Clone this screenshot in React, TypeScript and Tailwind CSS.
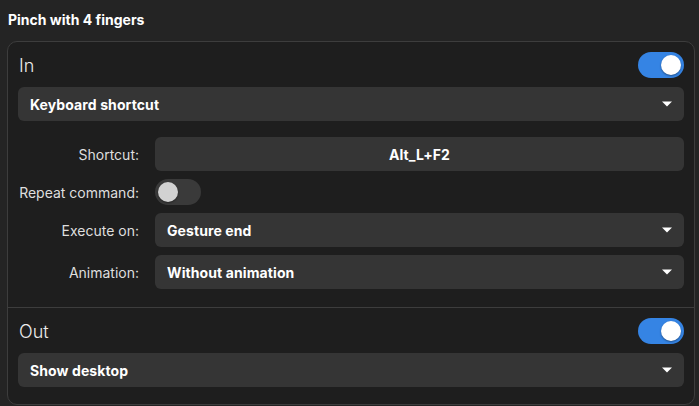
import React from "react";

function Toggle({ on }: { on: boolean }) {
  return (
    <div
      className={
        on
          ? "flex h-[26px] w-[46px] items-center justify-end rounded-full bg-[#3584e4] px-[3px]"
          : "flex h-[26px] w-[46px] items-center justify-start rounded-full bg-[#3a3a3a] px-[3px]"
      }
    >
      <div
        className={
          on
            ? "h-[20px] w-[20px] rounded-full bg-white shadow-[0_1px_2px_rgba(0,0,0,0.4)]"
            : "h-[20px] w-[20px] rounded-full bg-[#d2d2d2] shadow-[0_1px_2px_rgba(0,0,0,0.4)]"
        }
      />
    </div>
  );
}

function Arrow() {
  return (
    <svg width="10" height="6" viewBox="0 0 10 6" className="shrink-0">
      <path d="M0 0.5 L10 0.5 L5 5.5 Z" fill="#ffffff" />
    </svg>
  );
}

function Dropdown({ label }: { label: string }) {
  return (
    <div className="flex h-[34px] flex-1 items-center justify-between rounded-[6px] bg-[#353535] pl-3 pr-3">
      <span className="text-[14px] font-bold tracking-[0.1px] text-white">{label}</span>
      <Arrow />
    </div>
  );
}

function Row({ label, children }: { label: string; children: React.ReactNode }) {
  return (
    <div className="flex items-center gap-4">
      <div className="flex w-[121px] shrink-0 justify-end whitespace-nowrap text-[14px] text-[#dedede]">
        {label}
      </div>
      {children}
    </div>
  );
}

export default function App() {
  return (
    <div
      className="h-[406px] w-[699px] overflow-hidden bg-[#242424] px-[7px] pt-[10px]"
      style={{ fontFamily: "Inter, 'Noto Sans', sans-serif" }}
    >
      <div className="pl-[1px] text-[14px] font-bold leading-[20px] text-white">Pinch with 4 fingers</div>
      <div className="mt-[11px] w-[688px] rounded-[10px] border border-[#3d3d3d] bg-[#1e1e1e]">
        <div className="flex flex-col px-[10px] pb-[18px] pt-[10px]">
          <div className="flex h-[26px] items-center justify-between">
            <span className="pl-[1px] text-[18px] font-light text-[#ececec]">In</span>
            <Toggle on={true} />
          </div>
          <div className="mt-[9px] flex">
            <Dropdown label="Keyboard shortcut" />
          </div>
          <div className="mt-[16px] flex flex-col gap-2">
            <Row label="Shortcut:">
              <div className="flex h-[34px] flex-1 items-center justify-center rounded-[6px] bg-[#353535] text-[14px] font-bold tracking-[0.1px] text-white">
                Alt_L+F2
              </div>
            </Row>
            <Row label="Repeat command:">
              <Toggle on={false} />
            </Row>
            <Row label="Execute on:">
              <Dropdown label="Gesture end" />
            </Row>
            <Row label="Animation:">
              <Dropdown label="Without animation" />
            </Row>
          </div>
        </div>
        <div className="h-px bg-[#3d3d3d]" />
        <div className="flex flex-col px-[10px] pb-[17px] pt-[10px]">
          <div className="flex h-[26px] items-center justify-between">
            <span className="pl-[1px] text-[18px] font-light text-[#ececec]">Out</span>
            <Toggle on={true} />
          </div>
          <div className="mt-[9px] flex">
            <Dropdown label="Show desktop" />
          </div>
        </div>
      </div>
    </div>
  );
}
